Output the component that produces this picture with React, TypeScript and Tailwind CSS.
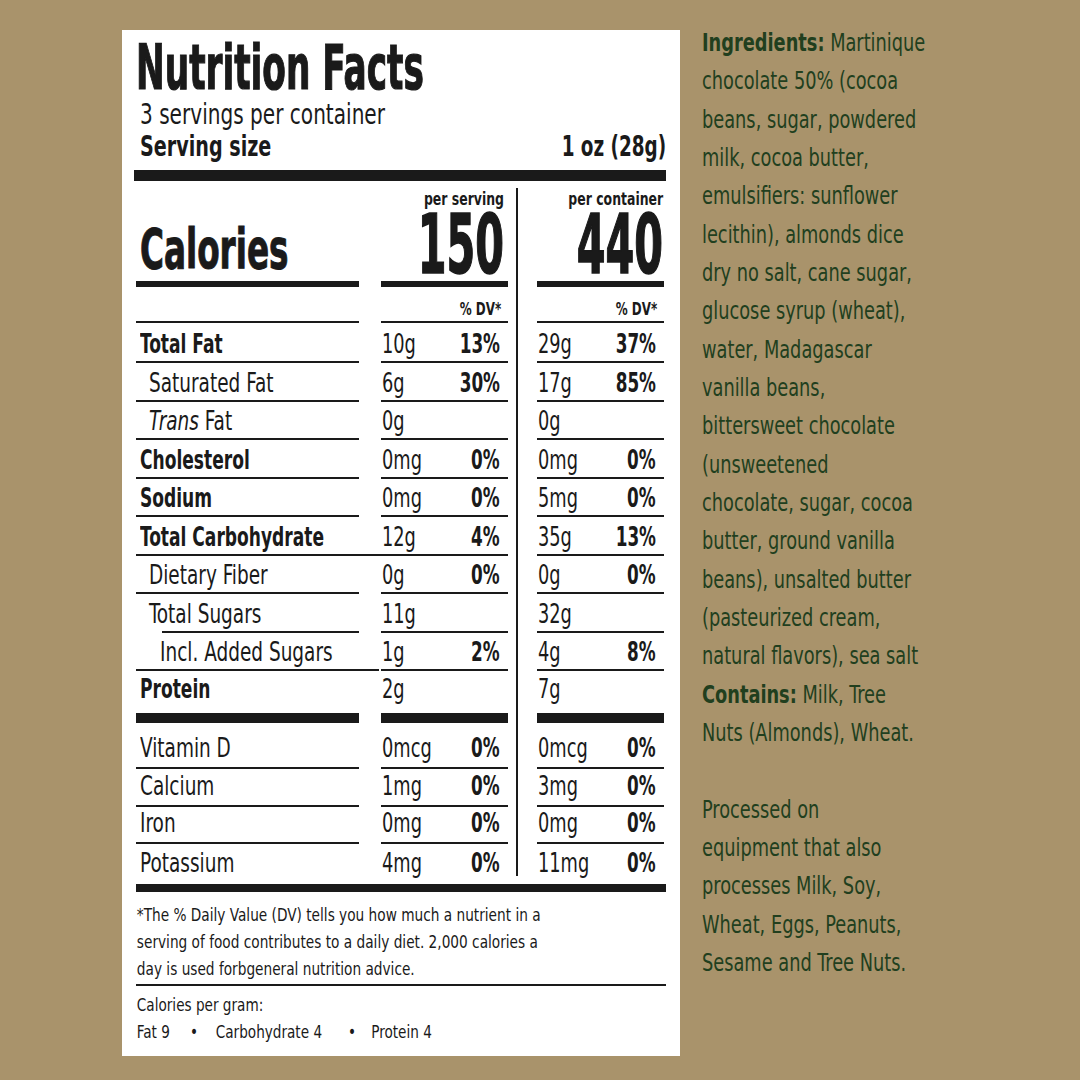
import React from "react";

type Nutrient = {
  label: React.ReactNode;
  kind: "bold" | "sub" | "sub2";
  serving: string;
  servingDv?: string;
  container: string;
  containerDv?: string;
  h: string;
  lineInset?: boolean;
};

const nutrients: Nutrient[] = [
  { label: "Total Fat", kind: "bold", serving: "10g", servingDv: "13%", container: "29g", containerDv: "37%", h: "h-[40px]" },
  { label: "Saturated Fat", kind: "sub", serving: "6g", servingDv: "30%", container: "17g", containerDv: "85%", h: "h-[38.5px]" },
  {
    label: (
      <>
        <i>Trans</i> Fat
      </>
    ),
    kind: "sub",
    serving: "0g",
    container: "0g",
    h: "h-[38.5px]",
  },
  { label: "Cholesterol", kind: "bold", serving: "0mg", servingDv: "0%", container: "0mg", containerDv: "0%", h: "h-[38.5px]" },
  { label: "Sodium", kind: "bold", serving: "0mg", servingDv: "0%", container: "5mg", containerDv: "0%", h: "h-[38.5px]" },
  { label: "Total Carbohydrate", kind: "bold", serving: "12g", servingDv: "4%", container: "35g", containerDv: "13%", h: "h-[38.5px]" },
  { label: "Dietary Fiber", kind: "sub", serving: "0g", servingDv: "0%", container: "0g", containerDv: "0%", h: "h-[38.5px]" },
  { label: "Total Sugars", kind: "sub", serving: "11g", container: "32g", h: "h-[38.5px]", lineInset: true },
  { label: "Incl. Added Sugars", kind: "sub2", serving: "1g", servingDv: "2%", container: "4g", containerDv: "8%", h: "h-[38.5px]" },
];

const vitamins = [
  { label: "Vitamin D", serving: "0mcg", container: "0mcg", h: "h-[46px]" },
  { label: "Calcium", serving: "1mg", container: "3mg", h: "h-[38px]" },
  { label: "Iron", serving: "0mg", container: "0mg", h: "h-[37px]" },
];

const labelPad = {
  bold: "pl-[4px]",
  sub: "pl-[13px]",
  sub2: "pl-[24px]",
};

// the label face is far narrower than anything installed, so glyphs get squeezed
function Sq({ children, className = "" }: { children: React.ReactNode; className?: string }) {
  return <span className={`inline-block whitespace-nowrap ${className}`}>{children}</span>;
}

function Divider({ top = false }: { top?: boolean }) {
  return <div className={`ml-[8px] mr-[19px] w-[2px] self-stretch bg-[#1a1a1a] ${top ? "mt-[7px]" : ""}`} />;
}

function AmountCell({ amount, dv, border }: { amount: string; dv?: string; border: string }) {
  return (
    <div className={`flex w-[127px] items-end justify-between pl-[1px] pr-[8px] ${border} border-[#1a1a1a]`}>
      <Sq className="origin-left scale-x-[0.76]">{amount}</Sq>
      {dv && <Sq className="origin-right scale-x-[0.72] font-bold">{dv}</Sq>}
    </div>
  );
}

export default function App() {
  return (
    <div className="flex h-[1080px] w-[1080px] items-start bg-[#a9936b] font-['DejaVu_Sans_Condensed','DejaVu_Sans',sans-serif] text-[#1a1a1a]">
      {/* label panel */}
      <div className="ml-[122px] mt-[30px] w-[558px] bg-white px-[14px] pt-[6px] pb-[11px]">
        <div className="text-[62px] leading-[63px] font-bold">
          <Sq className="origin-left scale-x-[0.615] [-webkit-text-stroke:1.2px_#1a1a1a]">Nutrition Facts</Sq>
        </div>
        <div className="pl-[4px] text-[29px] leading-[30px]">
          <Sq className="origin-left scale-x-[0.77]">3 servings per container</Sq>
        </div>
        <div className="flex justify-between pl-[4px] text-[28px] leading-[36px] font-bold">
          <Sq className="origin-left scale-x-[0.76]">Serving size</Sq>
          <Sq className="origin-right scale-x-[0.73]">1 oz (28g)</Sq>
        </div>
        <div className="mt-[5px] ml-[-2px] h-[11px] bg-[#1a1a1a]" />

        {/* calories */}
        <div className="flex">
          <div className="flex w-[223px] items-end border-b-[6px] border-[#1a1a1a] pl-[4px] text-[55px] leading-[64px] font-bold">
            <Sq className="origin-left scale-x-[0.66] [-webkit-text-stroke:1px_#1a1a1a]">Calories</Sq>
          </div>
          <div className="ml-[22px] flex w-[127px] flex-col items-end border-b-[6px] border-[#1a1a1a] pt-[8px] pr-[4px] font-bold">
            <Sq className="origin-right scale-x-[0.77] text-[18px] leading-[20px]">per serving</Sq>
            <Sq className="origin-right scale-x-[0.56] text-[82px] leading-[72px] [-webkit-text-stroke:1.6px_#1a1a1a]">150</Sq>
          </div>
          <Divider top />
          <div className="flex w-[127px] flex-col items-end border-b-[6px] border-[#1a1a1a] pt-[8px] pr-[1px] font-bold">
            <Sq className="origin-right scale-x-[0.77] text-[18px] leading-[20px]">per container</Sq>
            <Sq className="origin-right scale-x-[0.56] text-[82px] leading-[72px] [-webkit-text-stroke:1.6px_#1a1a1a]">440</Sq>
          </div>
        </div>

        {/* % DV header */}
        <div className="flex text-[17px] leading-[24px] font-bold">
          <div className="w-[223px] border-b-2 border-[#1a1a1a]" />
          <div className="ml-[22px] w-[127px] border-b-2 border-[#1a1a1a] pt-[10px] pr-[7px] text-right">
            <Sq className="origin-right scale-x-[0.78]">% DV*</Sq>
          </div>
          <Divider />
          <div className="w-[127px] border-b-2 border-[#1a1a1a] pt-[10px] pr-[7px] text-right">
            <Sq className="origin-right scale-x-[0.78]">% DV*</Sq>
          </div>
        </div>

        {/* nutrients */}
        <div className="text-[26px] leading-[30px]">
          {nutrients.map((n, i) => (
            <div key={i} className={`flex ${n.h}`}>
              <div className="flex w-[223px]">
                <div
                  className={`flex flex-1 items-end border-b-2 border-[#1a1a1a] pb-[2px] ${
                    n.lineInset ? "ml-[26px]" : labelPad[n.kind]
                  }`}
                >
                  {n.kind === "bold" ? (
                    <Sq className="origin-left scale-x-[0.73] font-bold">{n.label}</Sq>
                  ) : n.lineInset ? (
                    <Sq className="ml-[-13px] origin-left scale-x-[0.79]">{n.label}</Sq>
                  ) : (
                    <Sq className="origin-left scale-x-[0.79]">{n.label}</Sq>
                  )}
                </div>
              </div>
              <div className="ml-[22px] flex">
                <AmountCell amount={n.serving} dv={n.servingDv} border="border-b-2 pb-[2px]" />
              </div>
              <Divider />
              <AmountCell amount={n.container} dv={n.containerDv} border="border-b-2 pb-[2px]" />
            </div>
          ))}

          {/* protein */}
          <div className="flex h-[52px]">
            <div className="flex w-[223px] items-end border-b-[10px] border-[#1a1a1a] pb-[9px] pl-[4px] font-bold">
              <Sq className="origin-left scale-x-[0.73]">Protein</Sq>
            </div>
            <div className="ml-[22px] flex">
              <AmountCell amount="2g" border="border-b-[10px] pb-[9px]" />
            </div>
            <Divider />
            <AmountCell amount="7g" border="border-b-[10px] pb-[9px]" />
          </div>

          {/* vitamins & minerals */}
          {vitamins.map((v) => (
            <div key={v.label} className={`flex ${v.h}`}>
              <div className="flex w-[223px] items-end border-b-2 border-[#1a1a1a] pb-[4px] pl-[4px]">
                <Sq className="origin-left scale-x-[0.79]">{v.label}</Sq>
              </div>
              <div className="ml-[22px] flex">
                <AmountCell amount={v.serving} dv="0%" border="border-b-2 pb-[4px]" />
              </div>
              <Divider />
              <AmountCell amount={v.container} dv="0%" border="border-b-2 pb-[4px]" />
            </div>
          ))}
          <div className="flex h-[32px] leading-[26px]">
            <div className="flex w-[223px] items-end pl-[4px]">
              <Sq className="origin-left scale-x-[0.79]">Potassium</Sq>
            </div>
            <div className="ml-[22px] flex">
              <AmountCell amount="4mg" dv="0%" border="" />
            </div>
            <Divider />
            <AmountCell amount="11mg" dv="0%" border="" />
          </div>
        </div>

        <div className="mt-[8px] h-[8px] bg-[#1a1a1a]" />

        {/* footnote */}
        <div className="origin-left scale-x-[0.845] whitespace-nowrap pt-[9px] pl-[1px] text-[18px] leading-[27px]">
          *The % Daily Value (DV) tells you how much a nutrient in a
          <br />
          serving of food contributes to a daily diet. 2,000 calories a
          <br />
          day is used forbgeneral nutrition advice.
        </div>
        <div className="mt-[2px] h-[2px] bg-[#1a1a1a]" />
        <div className="origin-left scale-x-[0.84] whitespace-nowrap pt-[5px] pl-[1px] text-[18px] leading-[27px]">
          <div>Calories per gram:</div>
          <div className="flex">
            <span>Fat 9</span>
            <span className="ml-[24px]">•</span>
            <span className="ml-[21px]">Carbohydrate 4</span>
            <span className="ml-[31px]">•</span>
            <span className="ml-[18px]">Protein 4</span>
          </div>
        </div>
      </div>

      {/* ingredients */}
      <div className="ml-[22px] mt-[24px] origin-left scale-x-[0.79] whitespace-nowrap text-[25px] leading-[38.33px] text-[#213f1e]">
        <b>Ingredients:</b> Martinique
        <br />
        chocolate 50% (cocoa
        <br />
        beans, sugar, powdered
        <br />
        milk, cocoa butter,
        <br />
        emulsifiers: sunflower
        <br />
        lecithin), almonds dice
        <br />
        dry no salt, cane sugar,
        <br />
        glucose syrup (wheat),
        <br />
        water, Madagascar
        <br />
        vanilla beans,
        <br />
        bittersweet chocolate
        <br />
        (unsweetened
        <br />
        chocolate, sugar, cocoa
        <br />
        butter, ground vanilla
        <br />
        beans), unsalted butter
        <br />
        (pasteurized cream,
        <br />
        natural flavors), sea salt
        <br />
        <b>Contains:</b> Milk, Tree
        <br />
        Nuts (Almonds), Wheat.
        <br />
        <br />
        Processed on
        <br />
        equipment that also
        <br />
        processes Milk, Soy,
        <br />
        Wheat, Eggs, Peanuts,
        <br />
        Sesame and Tree Nuts.
      </div>
    </div>
  );
}
